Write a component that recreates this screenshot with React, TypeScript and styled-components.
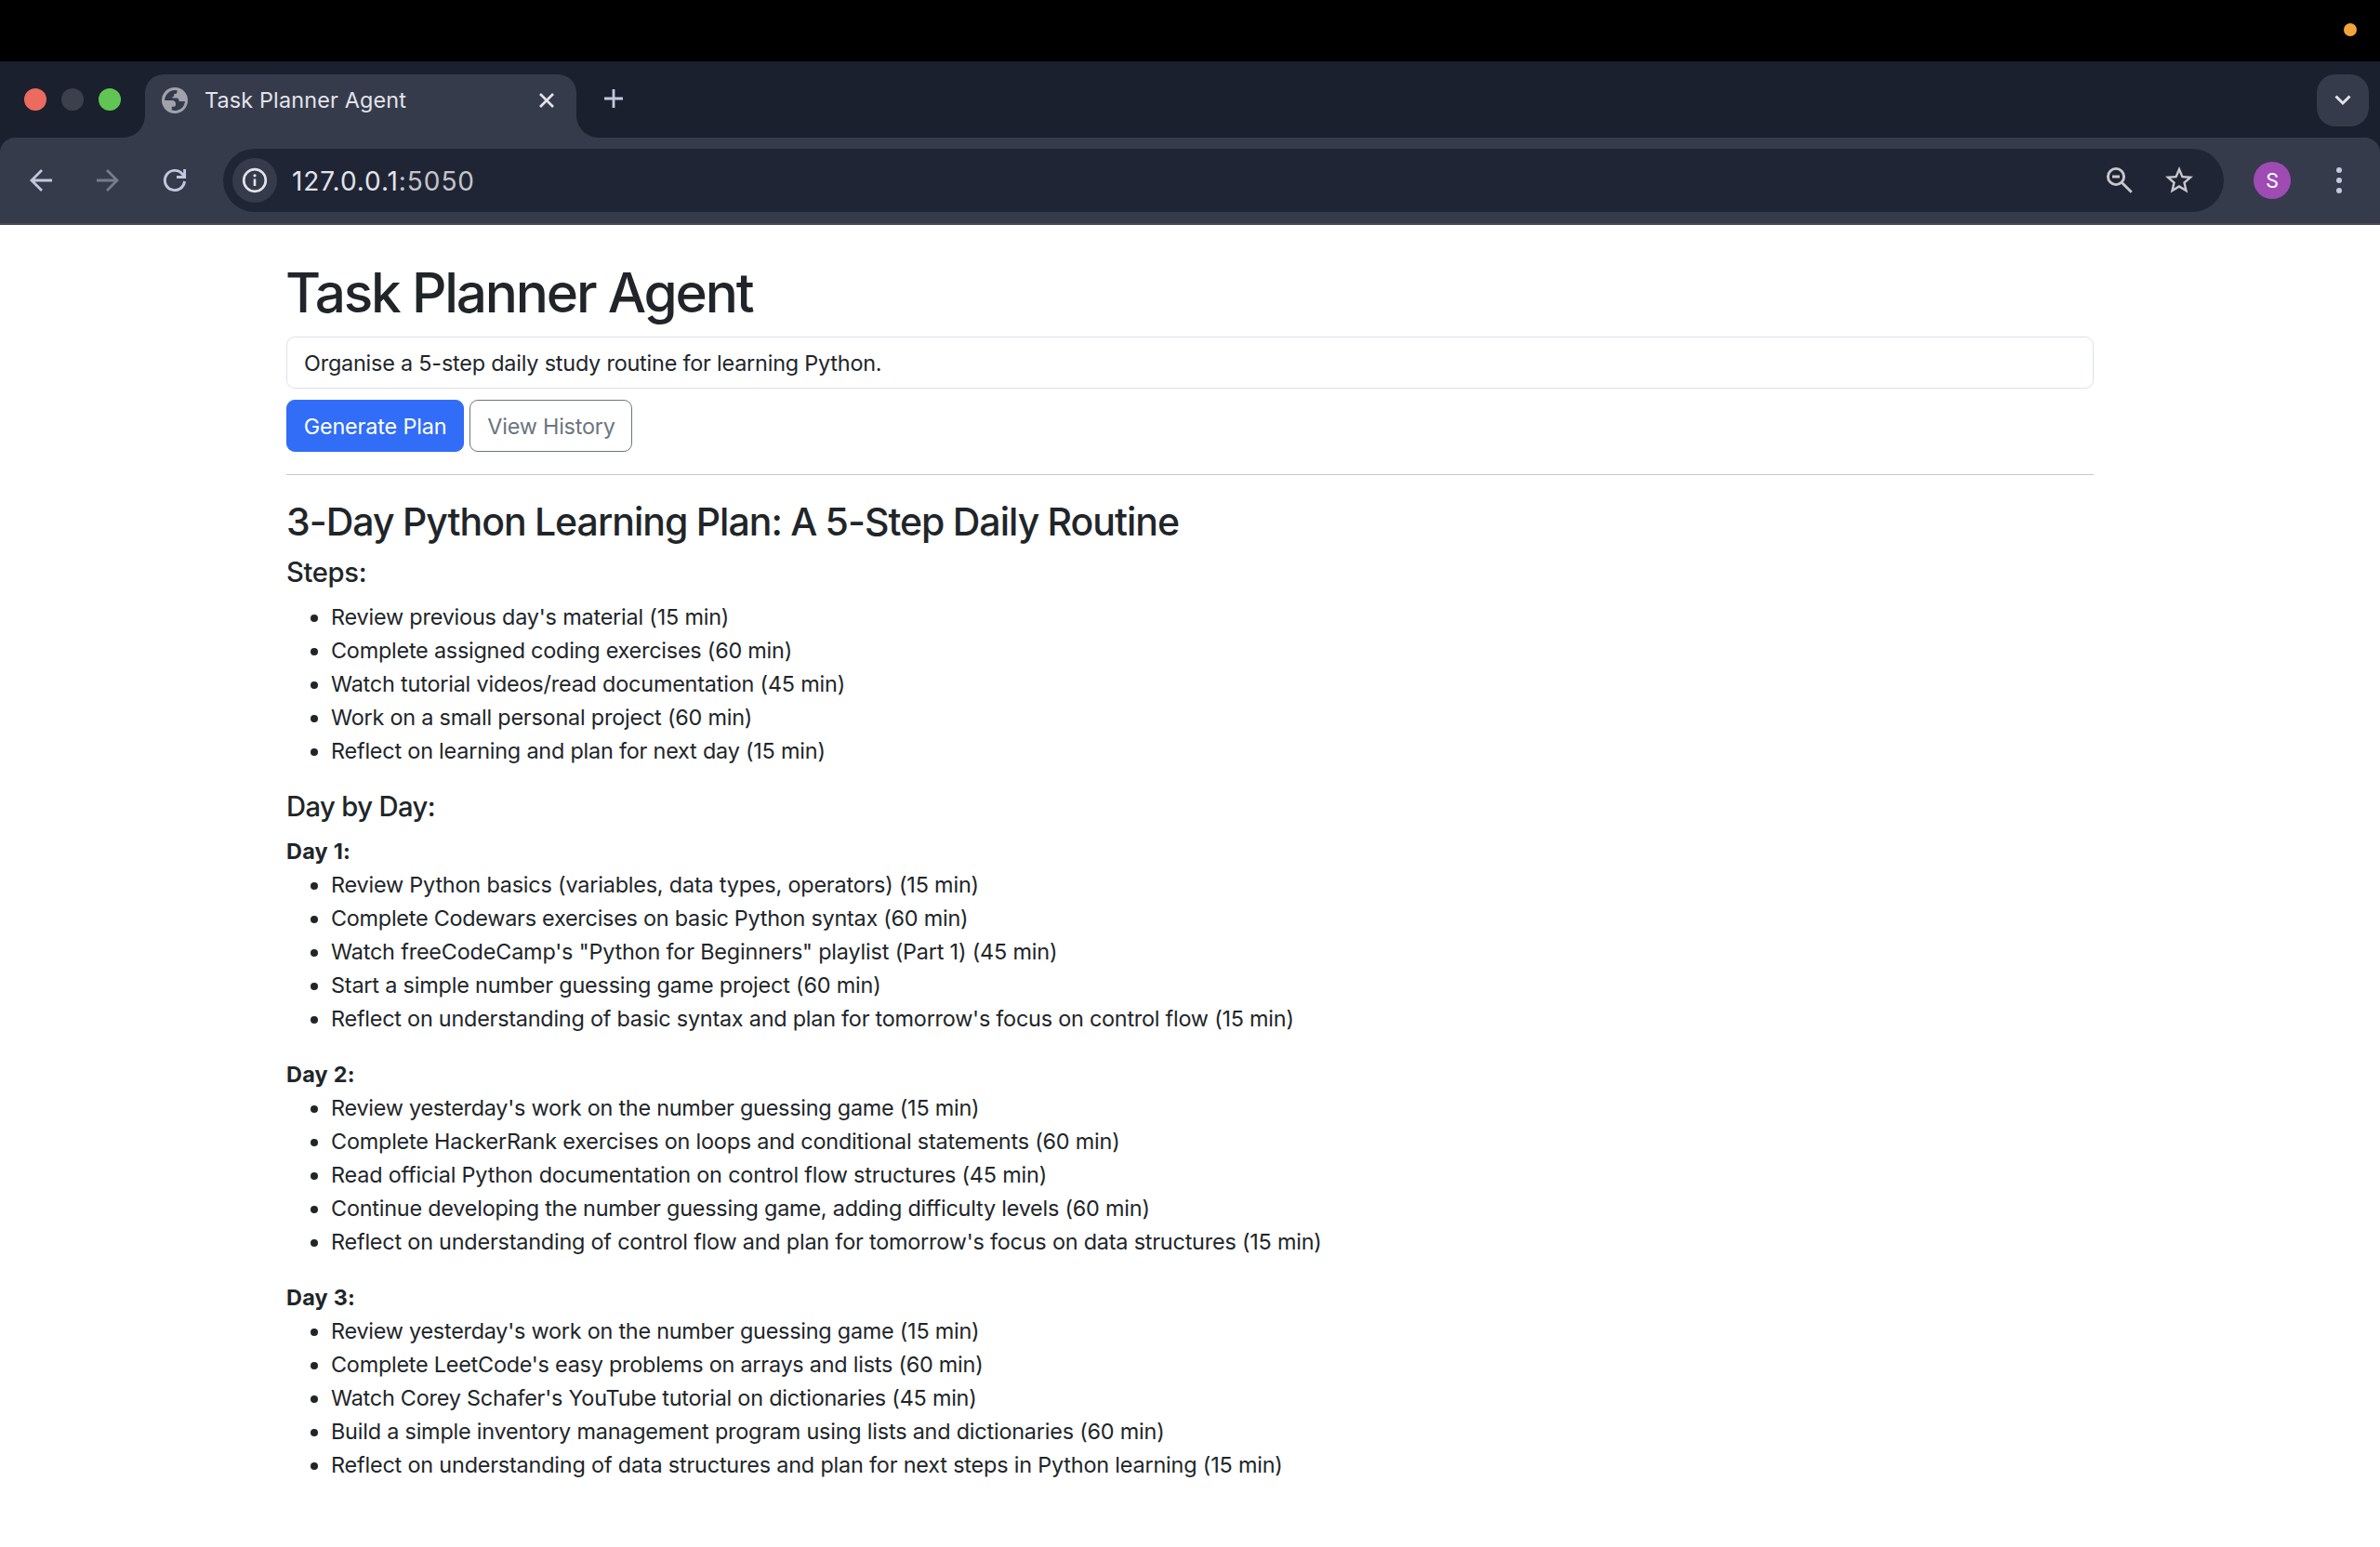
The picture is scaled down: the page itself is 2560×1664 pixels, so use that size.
import React from 'react';
import styled, { createGlobalStyle } from 'styled-components';

const GlobalStyle = createGlobalStyle`
  *, *::before, *::after { box-sizing: border-box; }
  html, body { margin: 0; padding: 0; background: #fff; }
  body { width: 2560px; height: 1664px; overflow: hidden; font-family: Inter, "Liberation Sans", sans-serif; }
`;

const Screen = styled.div`
  width: 2560px;
  height: 1664px;
  display: flex;
  flex-direction: column;
  background: #fff;
  color: #212529;
`;

const MenuBar = styled.div`
  height: 66px;
  flex: none;
  background: #000;
  display: flex;
  justify-content: flex-end;
  align-items: center;
  padding-right: 25px;
`;

const RecordingDot = styled.i`
  width: 14px;
  height: 14px;
  margin-top: -2px;
  border-radius: 50%;
  background: #f2a33c;
`;

const Frame = styled.div`
  flex: none;
  background: #1a202d;
`;

const TabStrip = styled.div`
  height: 82px;
  display: flex;
  align-items: flex-start;
  padding: 14px 12px 0 26px;
`;

const Lights = styled.div`
  display: flex;
  gap: 16px;
  padding-top: 15px;
  width: 130px;
`;

const Light = styled.i<{ $color: string }>`
  width: 24px;
  height: 24px;
  border-radius: 50%;
  background: ${(p) => p.$color};
`;

const Tab = styled.div`
  position: relative;
  width: 464px;
  height: 68px;
  padding: 0 24px 12px 18px;
  display: flex;
  align-items: center;
  background: #363b4b;
  border-radius: 20px 20px 0 0;
  color: #e2e3eb;
  &::before, &::after {
    content: '';
    position: absolute;
    bottom: 0;
    width: 24px;
    height: 24px;
  }
  &::before { left: -24px; background: radial-gradient(circle at 0 0, transparent 23.5px, #363b4b 24.5px); }
  &::after { right: -24px; background: radial-gradient(circle at 100% 0, transparent 23.5px, #363b4b 24.5px); }
`;

const TabTitle = styled.span`
  flex: 1;
  margin-left: 18px;
  font-size: 23.4px;
  line-height: 30px;
  letter-spacing: 0.15px;
  white-space: nowrap;
`;

const NewTab = styled.span`
  display: flex;
  flex: 1;
  padding: 16px 0 0 30px;
`;

const TabSearch = styled.div`
  width: 56px;
  height: 56px;
  border-radius: 20px;
  background: #363b4b;
  display: grid;
  place-items: center;
`;

const Toolbar = styled.div`
  height: 94px;
  display: flex;
  align-items: center;
  padding: 0 22px 0 28px;
  background: #363b4b;
  border-bottom: 2px solid #4a4c51;
  border-radius: 16px 16px 0 0;
`;

const NavButtons = styled.div`
  display: flex;
  gap: 40px;
  width: 212px;
`;

const Omnibox = styled.div`
  width: 2152px;
  height: 68px;
  border-radius: 34px;
  background: #1f2534;
  display: flex;
  align-items: center;
  padding: 0 30px 0 10px;
`;

const SiteInfo = styled.span`
  width: 48px;
  height: 48px;
  border-radius: 50%;
  background: #363b4b;
  display: grid;
  place-items: center;
`;

const Url = styled.span`
  flex: 1;
  margin-left: 16px;
  padding-top: 1px;
  font-size: 28px;
  letter-spacing: 0.93px;
  color: #e2e3eb;
  span { color: #c3c4ca; }
`;

const OmniActions = styled.span`
  display: flex;
  align-items: center;
  gap: 31px;
`;

const Avatar = styled.span`
  width: 40px;
  height: 40px;
  margin: 0 48px 0 32px;
  border-radius: 50%;
  background: #9f4bb4;
  color: #fff;
  font-family: Roboto, sans-serif;
  font-size: 22px;
  line-height: 41px;
  text-align: center;
`;

const Container = styled.main`
  width: 1944px;
  margin: 36px 0 0 308px;
  font-size: 23.4px;
  line-height: 36px;
`;

const PageTitle = styled.h1`
  margin: 0 0 12px -1px;
  padding-top: 1px;
  height: 72px;
  font-size: 58.4px;
  line-height: 72px;
  font-weight: 500;
  letter-spacing: -2.15px;
`;

const Prompt = styled.input`
  display: block;
  width: 100%;
  height: 56px;
  padding: 0 18px;
  border: 1px solid #dee2e6;
  border-radius: 9px;
  background: #fff;
  color: #212529;
  font: inherit;
  letter-spacing: -0.2px;
  outline: none;
`;

const Actions = styled.div`
  display: flex;
  gap: 6px;
  margin-top: 12px;
`;

const Button = styled.button<{ $primary?: boolean }>`
  width: ${(p) => (p.$primary ? 191 : 175)}px;
  height: 56px;
  padding: ${(p) => (p.$primary ? '1px 0 0' : '1px 0 0 1px')};
  border: 1px solid ${(p) => (p.$primary ? '#316df6' : '#6c757d')};
  border-radius: 9px;
  background: ${(p) => (p.$primary ? '#316df6' : '#fff')};
  color: ${(p) => (p.$primary ? '#fff' : '#6c757d')};
  font: inherit;
  letter-spacing: ${(p) => (p.$primary ? -0.15 : -0.22)}px;
  white-space: nowrap;
`;

const Rule = styled.hr`
  height: 1px;
  margin: 24px 0 25px;
  border: 0;
  background: #c7c8c9;
`;

const PlanTitle = styled.h3`
  margin: 0 0 12px;
  font-size: 41px;
  line-height: 50.4px;
  font-weight: 500;
  letter-spacing: -0.98px;
  word-spacing: -0.65px;
`;

const Heading = styled.h5<{ $track: number }>`
  margin: 0 0 12px;
  font-size: 29.2px;
  line-height: 36px;
  font-weight: 500;
  letter-spacing: ${(p) => p.$track}px;
`;

const DayName = styled.strong`
  display: block;
  font-weight: 700;
  letter-spacing: 0.25px;
`;

const List = styled.ul`
  margin: 0 0 24px;
  padding-left: 48px;
`;

const Item = styled.li<{ $track: number }>`
  letter-spacing: ${(p) => p.$track}px;
  white-space: nowrap;
`;

type Entry = [string, number];

const steps: Entry[] = [
  ["Review previous day's material (15 min)", -0.19],
  ['Complete assigned coding exercises (60 min)', -0.22],
  ['Watch tutorial videos/read documentation (45 min)', -0.19],
  ['Work on a small personal project (60 min)', -0.2],
  ['Reflect on learning and plan for next day (15 min)', -0.2],
];

const days: { name: string; tasks: Entry[] }[] = [
  {
    name: 'Day 1:',
    tasks: [
      ['Review Python basics (variables, data types, operators) (15 min)', -0.185],
      ['Complete Codewars exercises on basic Python syntax (60 min)', -0.245],
      ['Watch freeCodeCamp\'s "Python for Beginners" playlist (Part 1) (45 min)', -0.17],
      ['Start a simple number guessing game project (60 min)', -0.18],
      ["Reflect on understanding of basic syntax and plan for tomorrow's focus on control flow (15 min)", -0.225],
    ],
  },
  {
    name: 'Day 2:',
    tasks: [
      ["Review yesterday's work on the number guessing game (15 min)", -0.235],
      ['Complete HackerRank exercises on loops and conditional statements (60 min)', -0.195],
      ['Read official Python documentation on control flow structures (45 min)', -0.18],
      ['Continue developing the number guessing game, adding difficulty levels (60 min)', -0.21],
      ["Reflect on understanding of control flow and plan for tomorrow's focus on data structures (15 min)", -0.2],
    ],
  },
  {
    name: 'Day 3:',
    tasks: [
      ["Review yesterday's work on the number guessing game (15 min)", -0.235],
      ["Complete LeetCode's easy problems on arrays and lists (60 min)", -0.23],
      ["Watch Corey Schafer's YouTube tutorial on dictionaries (45 min)", -0.22],
      ['Build a simple inventory management program using lists and dictionaries (60 min)', -0.2],
      ['Reflect on understanding of data structures and plan for next steps in Python learning (15 min)', -0.18],
    ],
  },
];

const Globe = () => (
  <svg width="28" height="28" viewBox="0 0 28 28">
    <circle cx="14" cy="14" r="14" fill="#a0a3ab" />
    <path
      d="M3.100 14A11 11 0 0 1 16.500 3.300V5c0 1.300-.8 2-2 2h-1.300v1.500c0 1-.7 1.600-1.700 1.600v1.500h4.500c1.500 0 2.300.9 2.300 2.200 0 .9.600 1.300 1.500 1.300H25A11 11 0 0 1 10.800 24.500v-3.800h2.200c1.300 0 2-.8 2-2v-.9c0-2.500-1.500-3.800-4-3.800z"
      fill="#363b4b"
    />
  </svg>
);

const CloseIcon = () => (
  <svg width="16" height="16" viewBox="0 0 16 16" fill="none" stroke="#e2e3eb" strokeWidth="2.7">
    <path d="M1 1l14 14M15 1L1 15" />
  </svg>
);

const PlusIcon = () => (
  <svg width="20" height="20" viewBox="0 0 20 20" fill="none" stroke="#c3c8de" strokeWidth="2.8">
    <path d="M10 0v20M0 10h20" />
  </svg>
);

const ChevronIcon = () => (
  <svg width="18" height="12" viewBox="0 0 18 12" fill="none" stroke="#e2e3eb" strokeWidth="3">
    <path d="M1.500 1.500L9 9l7.500-7.500" />
  </svg>
);

const BackIcon = () => (
  <svg width="32" height="32" viewBox="0 0 32 32" fill="none" stroke="#c3c8de" strokeWidth="2.8">
    <path d="M28 16H6M17 5L6 16l11 11" />
  </svg>
);

const ForwardIcon = () => (
  <svg width="32" height="32" viewBox="0 0 32 32" fill="none" stroke="#777c88" strokeWidth="2.8">
    <path d="M4 16h22M15 5l11 11-11 11" />
  </svg>
);

const ReloadIcon = () => (
  <svg width="32" height="32" viewBox="0 0 32 32" fill="none" stroke="#c3c8de" strokeWidth="2.9">
    <path d="M26.500 17A10.600 10.600 0 1 1 24 9.100l2.500 2.700M26.600 4v8.500H18" />
  </svg>
);

const InfoIcon = () => (
  <svg width="28" height="28" viewBox="0 0 28 28" fill="none" stroke="#e2e3eb">
    <circle cx="14" cy="14" r="11.800" strokeWidth="2.7" />
    <path d="M14 12.500v7.500" strokeWidth="2.6" />
    <circle cx="14" cy="8.800" r="1.600" fill="#e2e3eb" stroke="none" />
  </svg>
);

const ZoomOutIcon = () => (
  <svg width="30" height="30" viewBox="0 0 30 30" fill="none" stroke="#c7c8ce" strokeWidth="2.9">
    <circle cx="11" cy="11" r="8.600" />
    <path d="M17.200 17.200L27.700 27.700M7 11h8" />
  </svg>
);

const StarIcon = () => (
  <svg width="36" height="36" viewBox="0 0 24 24" fill="#c7c8ce">
    <path d="M22 9.240l-7.190-.62L12 2 9.190 8.630 2 9.240l5.460 4.730L5.820 21 12 17.270 18.180 21l-1.630-7.030L22 9.240zM12 15.400l-3.760 2.270 1-4.280-3.320-2.880 4.380-.38L12 6.100l1.710 4.040 4.380.38-3.320 2.880 1 4.280L12 15.400z" />
  </svg>
);

const MoreIcon = () => (
  <svg width="8" height="30" viewBox="0 0 8 30" fill="#c3c8de">
    <circle cx="4" cy="4" r="3" />
    <circle cx="4" cy="15" r="3" />
    <circle cx="4" cy="26" r="3" />
  </svg>
);

const TaskList = ({ entries }: { entries: Entry[] }) => (
  <List>
    {entries.map(([text, track]) => (
      <Item key={text} $track={track}>{text}</Item>
    ))}
  </List>
);

export default function App() {
  return (
    <Screen>
      <GlobalStyle />
      <MenuBar><RecordingDot /></MenuBar>
      <Frame>
        <TabStrip>
          <Lights>
            <Light $color="#ec6a5e" />
            <Light $color="#3b404c" />
            <Light $color="#61c554" />
          </Lights>
          <Tab>
            <Globe />
            <TabTitle>Task Planner Agent</TabTitle>
            <CloseIcon />
          </Tab>
          <NewTab><PlusIcon /></NewTab>
          <TabSearch><ChevronIcon /></TabSearch>
        </TabStrip>
        <Toolbar>
          <NavButtons>
            <BackIcon />
            <ForwardIcon />
            <ReloadIcon />
          </NavButtons>
          <Omnibox>
            <SiteInfo><InfoIcon /></SiteInfo>
            <Url>127.0.0.1<span>:5050</span></Url>
            <OmniActions>
              <ZoomOutIcon />
              <StarIcon />
            </OmniActions>
          </Omnibox>
          <Avatar>S</Avatar>
          <MoreIcon />
        </Toolbar>
      </Frame>
      <Container>
        <PageTitle>Task Planner Agent</PageTitle>
        <Prompt defaultValue="Organise a 5-step daily study routine for learning Python." />
        <Actions>
          <Button $primary>Generate Plan</Button>
          <Button>View History</Button>
        </Actions>
        <Rule />
        <PlanTitle>3-Day Python Learning Plan: A 5-Step Daily Routine</PlanTitle>
        <Heading $track={-0.35}>Steps:</Heading>
        <TaskList entries={steps} />
        <Heading $track={-0.6}>Day by Day:</Heading>
        {days.map((day) => (
          <section key={day.name}>
            <DayName>{day.name}</DayName>
            <TaskList entries={day.tasks} />
          </section>
        ))}
      </Container>
    </Screen>
  );
}
